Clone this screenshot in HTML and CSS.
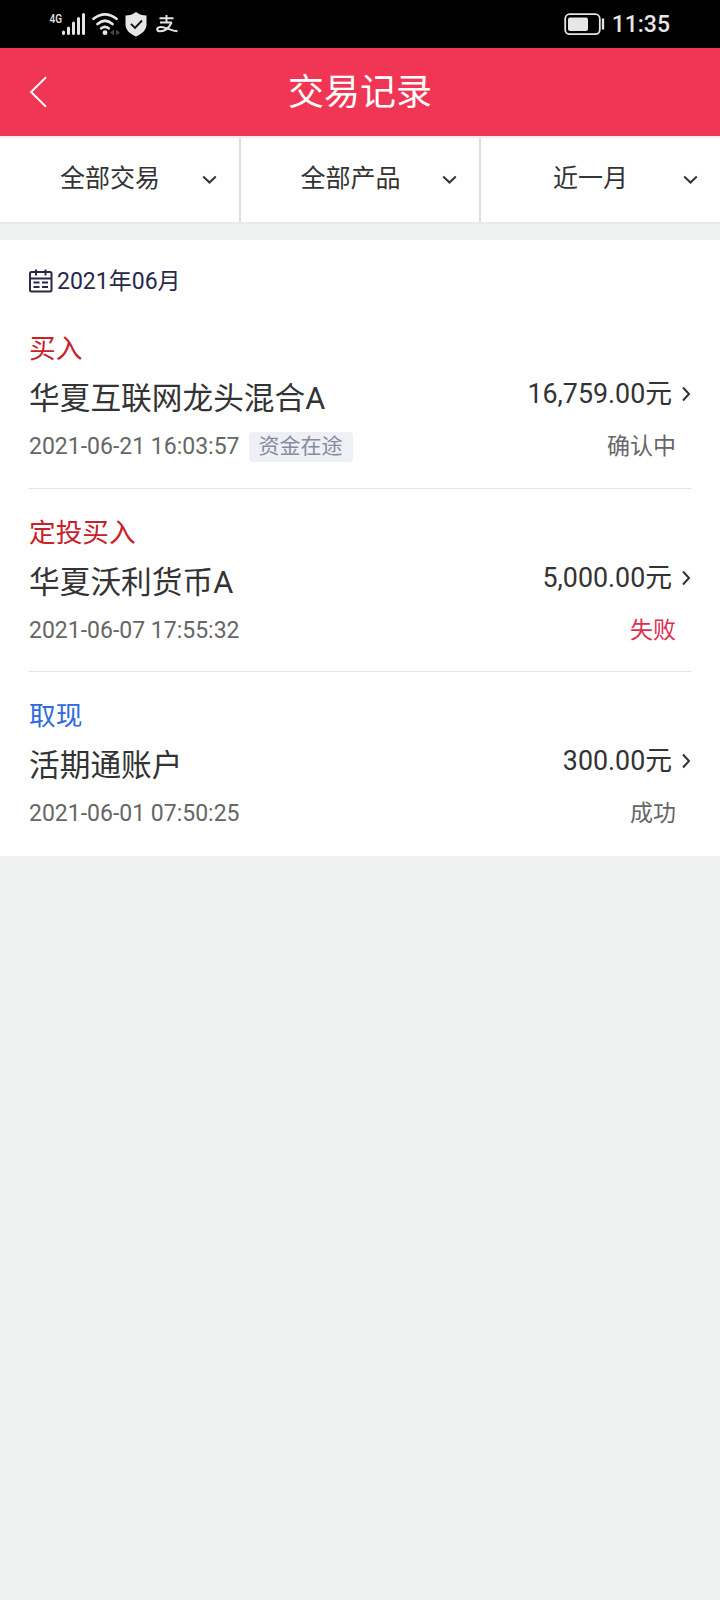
FILE: index.html
```
<!DOCTYPE html>
<html lang="zh-CN">
<head>
<meta charset="utf-8">
<title>交易记录</title>
<link rel="stylesheet" href="styles.css">
</head>
<body>
<div class="statusbar">
  <svg class="status-icons" width="150" height="48" viewBox="40 0 150 48">
    <text x="49.5" y="22.5" class="net" textLength="12.5" lengthAdjust="spacingAndGlyphs">4G</text>
    <g stroke="#e6e6e6" stroke-width="3" stroke-linecap="round">
      <path d="M63.5 32v1.5M68.5 28v5.5M73.5 23v10.5M78.5 18.500v15M83.500 14.500v19"/>
    </g>
    <g fill="none" stroke="#e6e6e6" stroke-width="2.7" stroke-linecap="round">
      <path d="M93.500 18.800Q105 9.800 116.500 18.800M97.500 24Q105 17.500 112.500 24M101.300 28.300Q105 25.300 108.700 28.300"/>
    </g>
    <circle cx="105" cy="32.700" r="2.400" fill="#e6e6e6"/>
    <path d="M114 29.500v6l-4-3zM116 29.500v6l4-3z" fill="#444"/>
    <path d="M136 12c3 2.600 6.500 3.300 10.500 3.500v9c0 5.500-4.500 9.500-10.500 12-6-2.500-10.500-6.500-10.500-12v-9c4-.2 7.500-.9 10.500-3.500z" fill="#e6e6e6"/>
    <path d="M131 23.800l4 4 7-7.300" fill="none" stroke="#111" stroke-width="1.900"/>
    <g fill="none" stroke="#e6e6e6" stroke-width="1.900">
      <path d="M159.500 18.200h14M166.500 15v7.300M160 22.500h12"/>
      <path d="M171.500 22.500C169 28 164.500 31.500 159.500 31.300C156 31 156.500 27 161 27C166 27 171 31 177.500 31.200" stroke-width="2.100"/>
    </g>
  </svg>
  <div class="status-right">
    <svg width="42" height="24" viewBox="0 0 42 24">
      <rect x="1.200" y="2.200" width="34.600" height="20" rx="4.500" fill="none" stroke="#e6e6e6" stroke-width="1.800"/>
      <rect x="4" y="5.500" width="20" height="13.500" rx="2" fill="#e6e6e6"/>
      <path d="M39 6.500v11" stroke="#e6e6e6" stroke-width="2.300"/>
    </svg>
    <span class="clock">11:35</span>
  </div>
</div>
<header class="header">
  <svg class="back" width="18" height="32" viewBox="0 0 18 32"><path d="M17 1.200L2 16l15 14.800" fill="none" stroke="#fff" stroke-width="1.900"/></svg>
  <h1 class="title">交易记录</h1>
</header>
<nav class="filters">
  <div class="filter"><span class="filter-label">全部交易</span><svg class="caret" width="15" height="10" viewBox="0 0 15 10"><path d="M1.200 1.500l6.300 6 6.300-6"/></svg></div>
  <div class="filter"><span class="filter-label">全部产品</span><svg class="caret" width="15" height="10" viewBox="0 0 15 10"><path d="M1.200 1.500l6.300 6 6.300-6"/></svg></div>
  <div class="filter"><span class="filter-label">近一月</span><svg class="caret" width="15" height="10" viewBox="0 0 15 10"><path d="M1.200 1.500l6.300 6 6.300-6"/></svg></div>
</nav>
<main class="records">
  <div class="month">
    <svg width="24" height="24" viewBox="0 0 24 24" fill="none" stroke="#28284b" stroke-width="2">
      <rect x="1" y="3" width="21.500" height="19.500" rx="1.500"/>
      <path d="M1 9.500h21.500M7 .5v6M16.500 .5v6"/>
      <path d="M4.500 13.500h6M13 13.500h6M4.500 18h6M13 18h6" stroke-width="1.800"/>
    </svg>
    <span>2021年06月</span>
  </div>
  <section class="record">
    <div class="info">
      <div class="type buy">买入</div>
      <div class="name">华夏互联网龙头混合A</div>
      <div class="time">2021-06-21 16:03:57<span class="tag">资金在途</span></div>
    </div>
    <div class="result">
      <div class="amount">16,759.00元<svg class="arrow" width="10" height="16" viewBox="0 0 10 16"><path d="M2 1.500l6 6.500-6 6.500"/></svg></div>
      <div class="state">确认中</div>
    </div>
  </section>
  <section class="record">
    <div class="info">
      <div class="type buy">定投买入</div>
      <div class="name">华夏沃利货币A</div>
      <div class="time">2021-06-07 17:55:32</div>
    </div>
    <div class="result">
      <div class="amount">5,000.00元<svg class="arrow" width="10" height="16" viewBox="0 0 10 16"><path d="M2 1.500l6 6.500-6 6.500"/></svg></div>
      <div class="state failed">失败</div>
    </div>
  </section>
  <section class="record">
    <div class="info">
      <div class="type cash">取现</div>
      <div class="name">活期通账户</div>
      <div class="time">2021-06-01 07:50:25</div>
    </div>
    <div class="result">
      <div class="amount">300.00元<svg class="arrow" width="10" height="16" viewBox="0 0 10 16"><path d="M2 1.500l6 6.500-6 6.500"/></svg></div>
      <div class="state">成功</div>
    </div>
  </section>
</main>
</body>
</html>
```
FILE: styles.css
```
* { box-sizing: border-box; }
body {
  margin: 0;
  min-height: 1600px;
  background: #eff1f1;
  color: #333;
  font-family: Roboto, "Noto Sans CJK SC", sans-serif;
}
svg { display: block; flex: none; }
.statusbar {
  height: 48px;
  padding: 0 50px 0 40px;
  background: #000;
  color: #e6e6e6;
  display: flex;
  justify-content: space-between;
}
.net { font: 500 13px Roboto, sans-serif; fill: #e6e6e6; }
.status-right { display: flex; align-items: center; gap: 6px; }
.clock { font-size: 23px; font-weight: 500; line-height: 48px; padding-top: 2px; }
.header {
  height: 88px;
  padding: 0 29px;
  background: #f13555;
  color: #fff;
  display: grid;
  grid-template-columns: 18px 1fr 18px;
  align-items: center;
}
.title { margin: 0; padding-top: 3px; font-size: 36px; font-weight: 400; line-height: 85px; text-align: center; }
.filters {
  height: 88px;
  display: grid;
  grid-template-columns: 241px 240px 239px;
  background: #fff;
  border-top: 2px solid #f1ebec;
  border-bottom: 2px solid #e7e8e8;
}
.filter {
  display: flex;
  align-items: center;
  padding: 0 22px 0 18px;
  border-right: 2px solid #dedede;
}
.filter:last-child { border-right: 0; padding: 0 22px 0 17px; }
.filter-label { flex: 1; text-align: center; font-size: 25px; line-height: 82px; padding-bottom: 2px; }
.caret { fill: none; stroke: #333; stroke-width: 2; }
.records { margin-top: 16px; background: #fff; height: 616px; }
.month {
  height: 65px;
  padding: 17px 29px 0;
  display: flex;
  align-items: center;
  gap: 4px;
  color: #28284b;
  font-size: 23px;
  line-height: 46px;
}
.month span { padding-top: 1px; }
.record {
  height: 183.700px;
  margin: 0 29px;
  padding-top: 26px;
  display: flex;
  justify-content: space-between;
  border-bottom: 1px solid #e3e3e3;
}
.record:last-child { border-bottom: 0; }
.type { font-size: 26.700px; line-height: 36px; }
.buy { color: #c9202a; }
.cash { color: #2f6bdf; }
.name { padding-top: 1px; font-size: 30.700px; line-height: 61px; }
.time { display: flex; align-items: center; font-size: 23px; line-height: 36px; height: 36px; color: #666; }
.tag {
  height: 30px;
  margin-left: 9px;
  padding: 0 10px;
  border-radius: 4px;
  background: #eef0f5;
  color: #868ba0;
  font-size: 21px;
  line-height: 28px;
}
.result { padding-top: 36px; }
.amount { display: flex; align-items: center; justify-content: flex-end; gap: 9px; font-size: 26.800px; line-height: 54px; }
.arrow { fill: none; stroke: #333; stroke-width: 2; }
.state { margin-top: 8px; padding-right: 15px; text-align: right; font-size: 23px; line-height: 36px; color: #666; }
.failed { color: #db304f; }
```
